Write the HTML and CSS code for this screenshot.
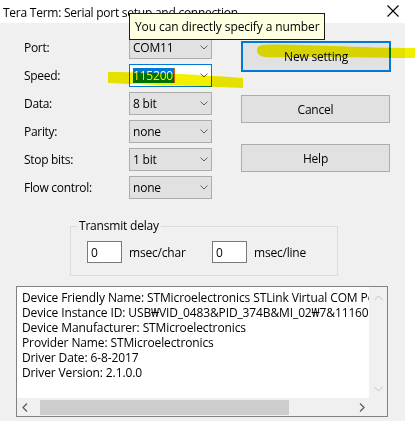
FILE: index.html
```html
<!DOCTYPE html>
<html>
<head>
<meta charset="utf-8">
<link rel="stylesheet" href="styles.css">
</head>
<body>
<div class="window">
  <div class="titlebar">
    <span class="title">Tera Term: Serial port setup and connection</span>
    <svg class="close" width="12" height="12" viewBox="0 0 12 12"><path d="M0.5 0.5 L11.5 11.5 M11.5 0.5 L0.5 11.5" stroke="#000" stroke-width="1.1" fill="none"/></svg>
  </div>
  <div class="client">
    <div class="top">
      <div class="form">
        <div class="label">Port:</div>
        <div class="select"><span>COM11</span><svg class="chev" width="8" height="5" viewBox="0 0 8 5"><path d="M0.5 0.5 L4 4 L7.5 0.5" stroke="#606060" fill="none"/></svg></div>
        <div class="label">Speed:</div>
        <div class="select edit"><span class="sel">115200</span><span class="caret"></span><svg class="chev" width="8" height="5" viewBox="0 0 8 5"><path d="M0.5 0.5 L4 4 L7.5 0.5" stroke="#606060" fill="none"/></svg></div>
        <div class="label">Data:</div>
        <div class="select"><span>8 bit</span><svg class="chev" width="8" height="5" viewBox="0 0 8 5"><path d="M0.5 0.5 L4 4 L7.5 0.5" stroke="#606060" fill="none"/></svg></div>
        <div class="label">Parity:</div>
        <div class="select"><span>none</span><svg class="chev" width="8" height="5" viewBox="0 0 8 5"><path d="M0.5 0.5 L4 4 L7.5 0.5" stroke="#606060" fill="none"/></svg></div>
        <div class="label">Stop bits:</div>
        <div class="select"><span>1 bit</span><svg class="chev" width="8" height="5" viewBox="0 0 8 5"><path d="M0.5 0.5 L4 4 L7.5 0.5" stroke="#606060" fill="none"/></svg></div>
        <div class="label">Flow control:</div>
        <div class="select"><span>none</span><svg class="chev" width="8" height="5" viewBox="0 0 8 5"><path d="M0.5 0.5 L4 4 L7.5 0.5" stroke="#606060" fill="none"/></svg></div>
      </div>
      <div class="buttons">
        <div class="btn default">New setting</div>
        <div class="btn cancel">Cancel</div>
        <div class="btn help">Help</div>
      </div>
    </div>
    <fieldset class="group">
      <legend>Transmit delay</legend>
      <div class="delay">
        <div class="num">0</div>
        <div class="unit">msec/char</div>
        <div class="num">0</div>
        <div class="unit">msec/line</div>
      </div>
    </fieldset>
    <div class="info">
      <div class="text">
        <div>Device Friendly Name: STMicroelectronics STLink Virtual COM Port (COM11)</div>
        <div>Device Instance ID: USB₩VID_0483&amp;PID_374B&amp;MI_02₩7&amp;11160E8D&amp;0&amp;0002</div>
        <div>Device Manufacturer: STMicroelectronics</div>
        <div>Provider Name: STMicroelectronics</div>
        <div>Driver Date: 6-8-2017</div>
        <div>Driver Version: 2.1.0.0</div>
      </div>
      <div class="vscroll">
        <svg width="9" height="6" viewBox="0 0 9 6"><path d="M0.5 5 L4.5 1 L8.5 5" stroke="#c2c2c2" fill="none"/></svg>
        <svg width="9" height="6" viewBox="0 0 9 6"><path d="M0.5 1 L4.5 5 L8.5 1" stroke="#c2c2c2" fill="none"/></svg>
      </div>
      <div class="hscroll">
        <svg class="harr" width="6" height="9" viewBox="0 0 6 9"><path d="M5 0.5 L1 4.5 L5 8.5" stroke="#606060" stroke-width="1.3" fill="none"/></svg>
        <div class="thumb"></div>
        <svg class="harr" width="6" height="9" viewBox="0 0 6 9"><path d="M1 0.5 L5 4.5 L1 8.5" stroke="#606060" stroke-width="1.3" fill="none"/></svg>
      </div>
      <div class="corner"></div>
    </div>
  </div>
  <div class="tooltip">You can directly specify a number</div>
  <svg class="marker" width="415" height="421" viewBox="0 0 415 421">
    <path d="M259 46 C263 43 300 45 330 46 C360 47 390 48 415 48 L415 58 C380 58 330 57 290 57 C275 57 265 58 261 56 C256 54 256 48 259 46 Z" fill="#f3ef00"/>
    <path d="M108 72 C140 72 190 74 243 78 L243 88 C200 86 150 85 108 83 Z" fill="#f3ef00"/>
  </svg>
</div>
</body>
</html>
```

FILE: styles.css
```css
html, body {
  margin: 0;
  padding: 0;
  background: #ffffff;
}
body {
  width: 415px;
  height: 421px;
  overflow: hidden;
  font-family: "Open Sans", "Noto Sans", sans-serif;
  font-size: 12px;
  color: #000;
}
.window {
  position: relative;
  width: 415px;
  height: 421px;
}
.titlebar {
  height: 23px;
  display: flex;
  align-items: center;
  justify-content: space-between;
  padding: 0 16px 0 3px;
  background: #fff;
}
.title {
  font-size: 12px;
  letter-spacing: -0.25px;
  margin-top: 2px;
}
.close {
  margin-top: -2px;
}
.client {
  width: 405px;
  height: 398px;
  background: #f0f0f0;
  display: flex;
  flex-direction: column;
}
.top {
  display: flex;
  padding: 13px 0 0 24px;
}
.form {
  display: grid;
  grid-template-columns: 105px 83px;
  grid-auto-rows: 23px;
  row-gap: 5px;
}
.label {
  display: flex;
  align-items: center;
  letter-spacing: -0.3px;
}
.select {
  box-sizing: border-box;
  border: 1px solid #adadad;
  background: #e1e1e1;
  display: flex;
  align-items: center;
  padding-left: 3px;
  padding-right: 3px;
  letter-spacing: -0.2px;
}
.select .chev {
  margin-left: auto;
}
.select.edit {
  background: #fff;
  border-color: #0078d7;
}
.sel {
  background: #0078d7;
  color: #fff;
  line-height: 15px;
  padding: 0 1px 0 0;
}
.caret {
  width: 1px;
  height: 15px;
  background: #e06020;
}
.buttons {
  display: flex;
  flex-direction: column;
  width: 150px;
  margin-left: 29px;
  padding-top: 5px;
}
.btn {
  box-sizing: border-box;
  height: 28px;
  border: 1px solid #adadad;
  background: #e1e1e1;
  display: flex;
  align-items: center;
  justify-content: center;
  letter-spacing: -0.2px;
}
.btn.default {
  height: 31px;
  border: 2px solid #0078d7;
}
.btn.cancel {
  margin-top: 23px;
  width: 149px;
}
.btn.help {
  margin-top: 21px;
  width: 149px;
}
.group {
  box-sizing: border-box;
  width: 266px;
  margin: 19px 0 0 70px;
  padding: 0;
  border: 1px solid #dcdcdc;
  height: 58px;
}
.group legend {
  margin-left: 6px;
  padding: 0 2px;
  line-height: 16px;
  letter-spacing: -0.2px;
}
.delay {
  display: flex;
  align-items: center;
  padding: 7px 0 0 16px;
}
.num {
  box-sizing: border-box;
  width: 35px;
  height: 22px;
  border: 1px solid #7a7a7a;
  background: #fff;
  padding-left: 3px;
  display: flex;
  align-items: center;
}
.unit {
  margin-left: 7px;
  width: 83px;
  letter-spacing: -0.2px;
}
.info {
  box-sizing: border-box;
  width: 372px;
  height: 131px;
  margin: 10px 0 0 16px;
  border: 1px solid #828282;
  display: grid;
  grid-template-columns: 1fr 18px;
  grid-template-rows: 1fr 18px;
  background: #f0f0f0;
}
.text {
  background: #fff;
  padding: 3px 0 0 5px;
  overflow: hidden;
  white-space: nowrap;
  line-height: 15px;
  letter-spacing: -0.12px;
}
.vscroll {
  display: flex;
  flex-direction: column;
  justify-content: space-between;
  align-items: center;
  padding: 8px 0 6px 0;
}
.hscroll {
  display: flex;
  align-items: center;
  padding: 0 4px 0 5px;
}
.thumb {
  margin-left: 12px;
  width: 249px;
  height: 15px;
  background: #cdcdcd;
}
.hscroll .harr:last-child {
  margin-left: auto;
}
.corner {
  background: #f0f0f0;
}
.tooltip {
  position: absolute;
  left: 129px;
  top: 13px;
  box-sizing: border-box;
  width: 196px;
  height: 27px;
  background: #ffffe1;
  border: 1px solid #1a1a1a;
  padding-left: 5px;
  display: flex;
  align-items: center;
  letter-spacing: -0.1px;
}
.marker {
  position: absolute;
  left: 0;
  top: 0;
  pointer-events: none;
  mix-blend-mode: multiply;
}
```
